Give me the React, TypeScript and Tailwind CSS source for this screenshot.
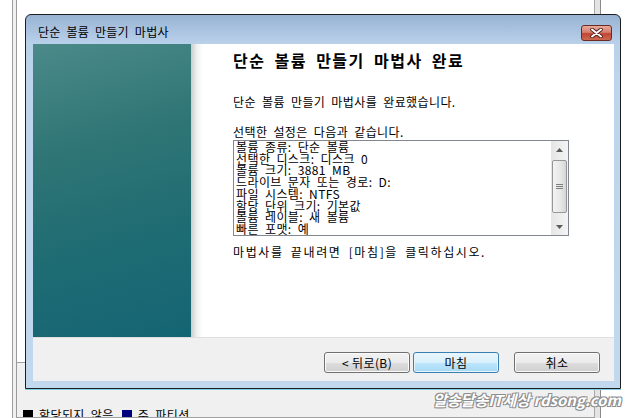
import React from 'react';

const summary = [
  '볼륨 종류: 단순 볼륨',
  '선택한 디스크: 디스크 0',
  '볼륨 크기: 3881 MB',
  '드라이브 문자 또는 경로: D:',
  '파일 시스템: NTFS',
  '할당 단위 크기: 기본값',
  '볼륨 레이블: 새 볼륨',
  '빠른 포맷: 예',
];

const WinButton: React.FC<{ label: string; primary?: boolean }> = ({ label, primary }) => (
  <button
    className={`w-[86px] h-[21px] rounded-[3px] border text-[12px] leading-none tracking-[0.4px] text-black ${
      primary
        ? 'border-[#3c7fb1] bg-[linear-gradient(180deg,#eaf6fd_0%,#d9f0fc_50%,#bee6fd_51%,#a7d9f5_100%)] shadow-[inset_0_0_0_1px_#e6f4fc]'
        : 'border-[#707070] bg-[linear-gradient(180deg,#f2f2f2_0%,#ebebeb_50%,#dddddd_51%,#cfcfcf_100%)] shadow-[inset_0_0_0_1px_#fbfbfb]'
    }`}
  >
    {label}
  </button>
);

const CloseButton = () => (
  <div className="w-[31px] h-[16px] rounded-[3px] border border-[#6b2a22] bg-[linear-gradient(180deg,#e9a99b_0%,#d47f6f_45%,#c14536_55%,#cc6a50_100%)] flex items-center justify-center">
    <svg width="13" height="10" viewBox="0 0 13 10">
      <path d="M2 1.5 L11 8.5 M11 1.5 L2 8.5" stroke="#4a1d16" strokeWidth="3.6" strokeLinecap="round" />
      <path d="M2 1.5 L11 8.5 M11 1.5 L2 8.5" stroke="#ffffff" strokeWidth="2" strokeLinecap="round" />
    </svg>
  </div>
);

const Arrow: React.FC<{ down?: boolean }> = ({ down }) => (
  <div className="h-[17px] flex items-center justify-center">
    <svg width="7" height="4" viewBox="0 0 7 4">
      <path d={down ? 'M0 0 H7 L3.5 4 Z' : 'M0 4 H7 L3.5 0 Z'} fill="#5b5b5b" />
    </svg>
  </div>
);

const ScrollBar = () => (
  <div className="w-[17px] h-full flex flex-col bg-[linear-gradient(90deg,#e5e5e5,#f4f4f4)]">
    <Arrow />
    <div className="flex-1 px-[1px] pt-[2px]">
      <div className="h-[53px] rounded-[2px] border border-[#979797] bg-[linear-gradient(90deg,#f3f3f3,#e6e6e6_60%,#d6d6d6)] flex flex-col items-center justify-center gap-[1px]">
        <div className="w-[7px] h-px bg-[#7d7d7d]" />
        <div className="w-[7px] h-px bg-[#7d7d7d]" />
        <div className="w-[7px] h-px bg-[#7d7d7d]" />
      </div>
    </div>
    <Arrow down />
  </div>
);

const App: React.FC = () => {
  return (
    <div className="relative w-[631px] h-[418px] overflow-hidden bg-white font-['Noto_Sans_CJK_KR',sans-serif] text-black">
      {/* background window */}
      <div className="flex h-full">
        <div className="w-[12px] bg-white" />
        <div className="w-px bg-[#a0a0a0]" />
        <div className="w-[3px] bg-[#f0f0f0]" />
        <div className="w-px bg-[#9a9a9a]" />
        <div className="flex-1 flex flex-col">
          <div className="h-[363px] shrink-0 bg-white border-b border-[#a0a0a0]" />
          <div className="flex-1 min-h-0 bg-[#f0f0f0] flex flex-col">
            <div className="flex-1 min-h-0 overflow-hidden pt-[47px] pl-[6px]">
              <div className="flex items-start gap-[6px] text-[12px] leading-[16px] tracking-[0.4px] [word-spacing:3px]">
                <div className="w-[10px] h-[10px] shrink-0 bg-black" />
                <span className="mr-[2px] -mt-[3px]">할당되지 않음</span>
                <div className="w-[10px] h-[10px] shrink-0 bg-[#00007f]" />
                <span className="-mt-[3px]">주 파티션</span>
              </div>
            </div>
            <div className="h-px shrink-0 bg-[#a0a0a0]" />
          </div>
        </div>
        <div className="w-px bg-[#a8a8a8]" />
        <div className="w-[5px] bg-[#e4e4e4]" />
        <div className="w-px bg-[#8a8a8a]" />
        <div className="w-[30px] bg-white" />
      </div>

      {/* dialog window */}
      <div className="absolute left-[25px] top-[14px] w-[596px] h-[375px] rounded-t-[6px] border border-[#1e1e1e] bg-[linear-gradient(180deg,#97b3d3_0px,#b9d0ea_28px,#bdd4ec_60px,#c2d8ee_100%)] flex flex-col shadow-[0_1px_0_#7fd0e6]">
        <div className="h-[29px] flex items-end justify-between pl-[12px] pr-[8px] pb-[3px]">
          <span className="text-[12px] leading-[16px] mb-[1px] tracking-[0.25px] [word-spacing:3px]">단순 볼륨 만들기 마법사</span>
          <CloseButton />
        </div>

        <div className="ml-[7px] mr-[6px] h-[337px] flex flex-col">
          <div className="h-[293px] flex">
            <div className="w-[158px] bg-[linear-gradient(165deg,#4b8a89_0%,#2f7575_35%,#1f6c73_65%,#146574_100%)]" />
            <div className="flex-1 bg-[linear-gradient(90deg,#c9cdcd_0px,#f2f2f2_6px,#ffffff_12px)] pl-[42px] pt-[6px] text-[12px] leading-[16px] tracking-[0.4px] [word-spacing:3px]">
              <h1 className="text-[16px] leading-[20px] font-bold tracking-[1.5px] [word-spacing:4px]">단순 볼륨 만들기 마법사 완료</h1>
              <p className="mt-[24px]">단순 볼륨 만들기 마법사를 완료했습니다.</p>
              <p className="mt-[14px]">선택한 설정은 다음과 같습니다.</p>
              <div className="w-[336px] h-[96px] border border-[#828790] bg-white flex">
                <div className="flex-1 pl-[2px] overflow-hidden">
                  {summary.map((line) => (
                    <div key={line} className="leading-[11.7px] whitespace-nowrap">
                      {line}
                    </div>
                  ))}
                </div>
                <ScrollBar />
              </div>
              <p className="mt-[8px] tracking-[1.6px]">마법사를 끝내려면 [마침]을 클릭하십시오.</p>
            </div>
          </div>
          <div className="h-px bg-[#dfdfdf]" />
          <div className="flex-1 bg-[#f0f0f0] flex justify-end items-start pt-[14px] pr-[14px]">
            <WinButton label="< 뒤로(B)" />
            <div className="w-[3px]" />
            <WinButton label="마침" primary />
            <div className="w-[15px]" />
            <WinButton label="취소" />
          </div>
        </div>
      </div>

      {/* watermark */}
      <div className="absolute left-[433px] top-[390px] text-[15px] leading-[20px] font-bold italic tracking-[0px] text-white whitespace-nowrap [text-shadow:1px_1px_0_#8c8c8c,-1px_-1px_0_#8c8c8c,1px_-1px_0_#8c8c8c,-1px_1px_0_#8c8c8c]">
        알송달송IT세상 rdsong.com
      </div>
    </div>
  );
};

export default App;
